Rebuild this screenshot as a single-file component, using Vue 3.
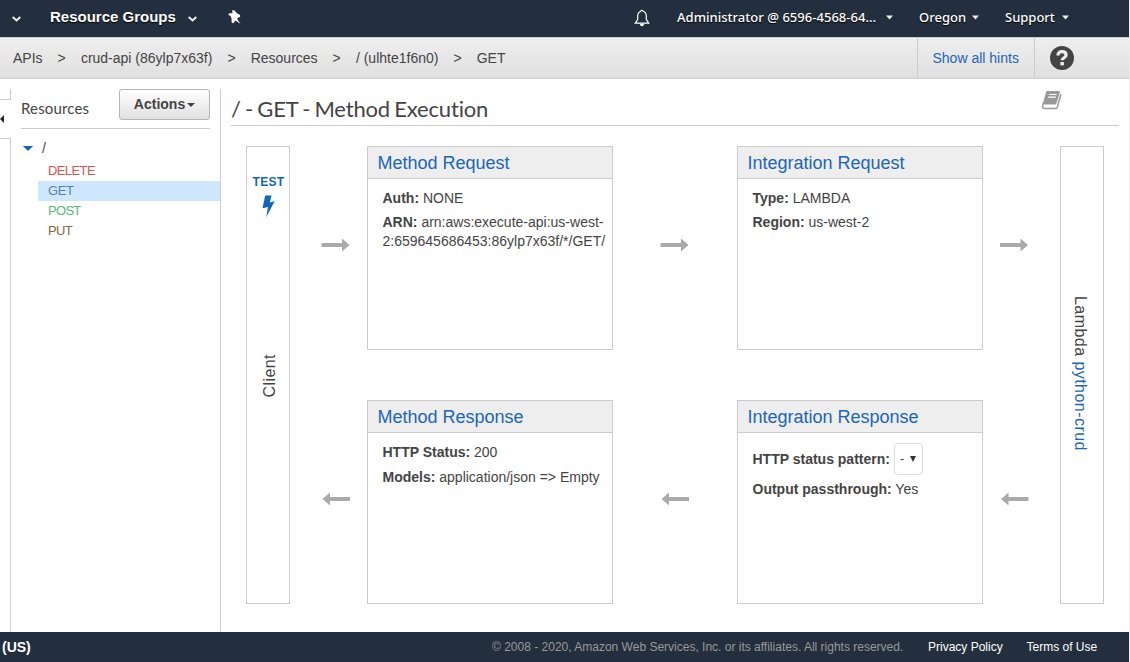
<script setup>
const crumbs = ['APIs', 'crud-api (86ylp7x63f)', 'Resources', '/ (ulhte1f6n0)', 'GET']
const methods = [
  { name: 'DELETE', cls: 'delete' },
  { name: 'GET', cls: 'get' },
  { name: 'POST', cls: 'post' },
  { name: 'PUT', cls: 'put' },
]
</script>

<template>
  <div class="console">
    <header class="topbar">
      <svg class="chev first" viewBox="0 0 9 6"><path d="M.7 1 4.5 4.4 8.3 1" /></svg>
      <span class="groups">Resource Groups</span>
      <svg class="chev" viewBox="0 0 9 6"><path d="M.7 1 4.5 4.4 8.3 1" /></svg>
      <svg class="pin" viewBox="0 0 13 14"><path d="M4 .6 6.2 .3 9.2 3.4 11.8 4.8 12.2 6.8 9.6 8 9.4 9.6 12.4 13.7 7.4 10.6 5.4 13.2 3.6 12.6 3.6 8.8 2.6 6 .4 5 .8 3.4 4.6 3Z" /></svg>
      <svg class="bell" viewBox="0 0 16 18"><path d="M6.8 2.5C4.5 3 3.7 4.8 3.7 7v3.5L1.2 14.2h13.6l-2.5-3.7V7c0-2.2-.8-4-3.1-4.5M6.8 2.5c0-1.7 2.4-1.7 2.4 0" /><path class="clapper" d="M5.8 14.7h4.4c0 1.5-1 2.5-2.2 2.5s-2.2-1-2.2-2.5Z" /></svg>
      <span class="account">Administrator @ 6596-4568-64...</span>
      <svg class="caret" viewBox="0 0 7 5"><path d="M0 .5h7L3.5 4.5Z" /></svg>
      <span class="region">Oregon</span>
      <svg class="caret" viewBox="0 0 7 5"><path d="M0 .5h7L3.5 4.5Z" /></svg>
      <span class="support">Support</span>
      <svg class="caret" viewBox="0 0 7 5"><path d="M0 .5h7L3.5 4.5Z" /></svg>
    </header>

    <nav class="crumbs">
      <template v-for="(c, i) in crumbs" :key="c">
        <span v-if="i" class="sep">&gt;</span>
        <span>{{ c }}</span>
      </template>
      <a class="hints">Show all hints</a>
      <div class="help">
        <svg viewBox="0 0 24 24"><circle cx="12" cy="12" r="12" /><path d="M8 9.4C8 6.8 9.7 5.6 12 5.6s4.1 1.2 4.1 3.4c0 2.8-3.9 2.7-3.9 5.3" /><rect x="10.4" y="16" width="3.5" height="3.4" /></svg>
      </div>
    </nav>

    <div class="body">
      <div class="rail">
        <div class="rail-top"></div>
        <div class="rail-gap"><svg viewBox="0 0 4 8"><path d="M4 0v8L0 4Z" /></svg></div>
        <div class="rail-rest"></div>
      </div>

      <aside class="side">
        <div class="side-head">
          <span>Resources</span>
          <button>Actions<i></i></button>
        </div>
        <div class="root"><i></i><span>/</span></div>
        <ul>
          <li v-for="m in methods" :key="m.name" :class="m.cls">{{ m.name }}</li>
        </ul>
      </aside>

      <main>
        <div class="title">
          <h1>/ - GET - Method Execution</h1>
          <svg class="book" viewBox="0 0 21 20"><path class="pages" d="M6.6 1H17.6q1.7 0 1.3 1.5L15.6 13q-.5 1.5-2 1.5H3Q1.6 14.5 2 13L5 2.2Q5.4 1 6.6 1Z" /><path class="edge" d="M2.2 13Q.3 18.4 3.4 18.4h11.2q1.3 0 1.8-1.5L20 4.3" /><path class="lines" d="M8 4.5h7.7M7.2 7.2h7.7" /></svg>
        </div>

        <div class="flow">
          <section class="bar client">
            <div class="test">TEST</div>
            <svg class="bolt" viewBox="0 0 13 23"><path d="M3.2.5h6.4L7.8 7.6 12.6 6.3 4.2 22.3 6 12.1.5 13.3Z" /></svg>
            <div class="vert up">Client</div>
          </section>
          <svg class="arrow a1" viewBox="0 0 29 14"><path d="M.5 5h20.5V.5L28.5 7 21 13.5V9H.5Z" /></svg>
          <section class="card">
            <h2>Method Request</h2>
            <div class="content">
              <p><b>Auth:</b> NONE</p>
              <p><b>ARN:</b> arn:aws:execute-api:us-west-<br>2:659645686453:86ylp7x63f/*/GET/</p>
            </div>
          </section>
          <svg class="arrow a2" viewBox="0 0 29 14"><path d="M.5 5h20.5V.5L28.5 7 21 13.5V9H.5Z" /></svg>
          <section class="card">
            <h2>Integration Request</h2>
            <div class="content">
              <p><b>Type:</b> LAMBDA</p>
              <p><b>Region:</b> us-west-2</p>
            </div>
          </section>
          <svg class="arrow a3" viewBox="0 0 29 14"><path d="M0 5h20.5V.5L28 7 20.5 13.5V9H0Z" /></svg>
          <section class="bar lambda">
            <div class="vert">Lambda <a>python-crud</a></div>
          </section>

          <svg class="arrow a1 back" viewBox="0 0 29 14"><path d="M0 5h20V.5L27.5 7 20 13.5V9H0Z" /></svg>
          <section class="card">
            <h2>Method Response</h2>
            <div class="content">
              <p><b>HTTP Status:</b> 200</p>
              <p class="models"><b>Models:</b> application/json =&gt; Empty</p>
            </div>
          </section>
          <svg class="arrow a2 back" viewBox="0 0 29 14"><path d="M0 5h20V.5L27.5 7 20 13.5V9H0Z" /></svg>
          <section class="card">
            <h2>Integration Response</h2>
            <div class="content">
              <div class="row"><b>HTTP status pattern:</b><span class="select"><span>-</span><i></i></span></div>
              <p><b>Output passthrough:</b> Yes</p>
            </div>
          </section>
          <svg class="arrow a3 back" viewBox="0 0 29 14"><path d="M.5 5h20V.5L28 7 20.5 13.5V9H.5Z" /></svg>
        </div>
      </main>
    </div>

    <footer>
      <b>(US)</b>
      <span class="copy">© 2008 - 2020, Amazon Web Services, Inc. or its affiliates. All rights reserved.</span>
      <a class="privacy">Privacy Policy</a>
      <a class="terms">Terms of Use</a>
    </footer>
  </div>
</template>

<style>
body { margin: 0; background: #fff; }
</style>

<style scoped>
* { box-sizing: border-box; }
.console {
  width: 1130px; height: 662px; overflow: hidden;
  display: flex; flex-direction: column;
  border-right: 1px solid #eee;
  font: 14px/20px "Liberation Sans", Arial, sans-serif; color: #444;
  white-space: nowrap;
}
svg { display: block; flex: none; }

.topbar {
  height: 37px; flex: none; background: #232f3e; color: #fff;
  display: flex; align-items: center; padding-bottom: 3px;
  text-shadow: 0 1px 1px #000;
}
.chev { width: 9px; height: 6px; margin-top: 3px; fill: none; stroke: #eee; stroke-width: 2; }
.first { margin-left: 12px; }
.groups { width: 126px; margin: 0 12px 0 29px; font-size: 15px; font-weight: bold; }
.pin { width: 13px; height: 14px; margin-left: 31px; fill: #fff; }
.bell { width: 16px; height: 18px; margin-left: 393px; margin-top: 1px; fill: none; stroke: #fff; stroke-width: 1.2; }
.bell .clapper { fill: #fff; stroke: none; }
.account, .region, .support { font: 500 13px/20px "Noto Sans", sans-serif; margin-top: -1px; }
.account { width: 200px; margin-left: 27px; letter-spacing: .03px; }
.region { width: 44px; margin-left: 26px; }
.support { width: 48px; margin-left: 26px; }
.caret { width: 7px; height: 5px; margin: 1px 0 0 9px; fill: #eee; }

.crumbs {
  height: 42px; flex: none; display: flex; align-items: center;
  padding-left: 13px; gap: 15px;
  border: solid #ccc; border-width: 1px 0;
  background: linear-gradient(#eee, #e0e0e0);
}
.sep { width: 8.3px; font-size: 14px; }
.hints {
  margin-left: auto; margin-right: -15px; width: 118px; align-self: stretch;
  border: solid #ccc; border-width: 0 1px; padding-left: 14.5px; line-height: 40px;
}
.help { width: 94px; padding-left: 15px; }
.help svg { width: 24px; height: 24px; fill: #444; }
.help path { fill: none; stroke: #eee; stroke-width: 3.2; }
.help rect { fill: #eee; }

.body { flex: 1; display: flex; min-height: 0; padding-top: 10px; }
.rail { width: 11px; display: flex; flex-direction: column; }
.rail-top { height: 11px; border: solid #ccc; border-width: 0 1px 1px 0; }
.rail-gap { height: 38px; padding-top: 15px; }
.rail-gap svg { width: 4px; height: 8px; fill: #222; }
.rail-rest { flex: 1; border: solid #ccc; border-width: 1px 1px 0 0; }

.side { width: 210px; border-right: 1px solid #ccc; }
.side-head {
  height: 40px; margin: 0 10px; border-bottom: 1px solid #ccc;
  display: flex; justify-content: space-between; align-items: flex-start;
}
.side-head span { font: 15px/20px "Lato", sans-serif; margin-top: 9px; letter-spacing: .15px; }
button {
  width: 91px; height: 31px; padding: 0 0 1px; border: 1px solid #b5b5b5; border-radius: 3px;
  background: linear-gradient(#fff, #e0e0e0);
  font: bold 14px/20px "Liberation Sans", sans-serif; color: #444;
  display: flex; align-items: center; justify-content: center; gap: 2px;
}
button i { border: 4px solid transparent; border-top-color: #444; border-bottom: 0; margin-top: 2px; }
.root { height: 20px; margin-top: 9px; padding-left: 12px; display: flex; align-items: center; gap: 9px; }
.root i { border: 5px solid transparent; border-top-color: #1166bb; border-bottom: 0; }
.root span { color: #446; }
ul { list-style: none; margin: 3px 0 0 27px; padding: 0; }
li { height: 20px; padding-left: 10px; font-size: 13px; letter-spacing: -.6px; }
.delete { color: #d9534f; }
.get { color: #5584b4; background: #cfe6ff; letter-spacing: -.4px; }
.post { color: #55b87c; letter-spacing: -.7px; }
.put { color: #86683c; }

main { flex: 1; padding: 0 10px; }
.title { height: 37px; border-bottom: 1px solid #ccc; display: flex; justify-content: space-between; }
h1 { margin: 5px 0 0; font: 400 22px/30px "Lato", sans-serif; letter-spacing: -.17px; word-spacing: -1.2px; }
.book { width: 21px; height: 20px; margin: 1px 57px 0 0; }
.pages { fill: #999; }
.edge { fill: none; stroke: #999; stroke-width: 1.5; }
.lines { fill: none; stroke: #fff; stroke-width: 1.2; }

.flow {
  margin: 20px 0 0 15px; width: 858px;
  display: grid; grid-template-columns: 44px 77px 246px 124px 246px 77px 44px;
  grid-template-rows: 204px 204px; row-gap: 50px;
}
.bar { grid-row: span 2; border: 1px solid #ccc; display: flex; flex-direction: column; align-items: center; }
.test { margin-top: 25px; font: bold 12px/20px "Liberation Sans", sans-serif; color: #1166bb; letter-spacing: .3px; padding-left: 1px; }
.bolt { width: 13px; height: 23px; margin-top: 3px; fill: #1166bb; }
.vert { writing-mode: vertical-rl; font-size: 16px; line-height: 20px; letter-spacing: .45px; }
.up { transform: rotate(180deg); margin-top: 136px; margin-left: 4px; }
.lambda { grid-column: 7; }
.lambda .vert { margin-top: 149px; margin-right: 4px; }
a { color: #1a66bb; }
.arrow { width: 29px; height: 14px; fill: #aaa; align-self: start; margin-top: 92px; }
.a1 { margin-left: 31px; }
.a2 { margin-left: 47px; }
.a3 { margin-left: 17px; }
.arrow.back { transform: scaleX(-1); }
.card { border: 1px solid #ccc; }
h2 { margin: 0; height: 32px; padding-left: 9.5px; background: #eee; border-bottom: 1px solid #ccc; font: 400 18px/32px "Liberation Sans", sans-serif; color: #1a66bb; }
.content { padding: 10px 0 0 14.5px; }
p { margin: 0 0 5px; line-height: 19px; }
.models { margin-top: 6px; }
.row { display: flex; align-items: center; height: 32px; gap: 4px; margin-bottom: 5px; }
.select { width: 29px; height: 32px; border: 1px solid #ddd; border-radius: 4px; display: flex; align-items: center; padding-left: 5px; font-size: 13px; gap: 6px; }
.select i { border: 3px solid transparent; border-top: 6px solid #333; border-bottom: 0; }

footer { height: 30px; flex: none; background: #232f3e; color: #fff; font-size: 12px; display: flex; align-items: center; padding-left: 2px; }
footer b { font-size: 14px; width: 30px; }
.copy { color: #999; margin-left: 460px; width: 412px; }
footer a { color: #fff; }
.privacy { margin-left: 24px; width: 75px; }
.terms { margin-left: 23.5px; }
</style>
